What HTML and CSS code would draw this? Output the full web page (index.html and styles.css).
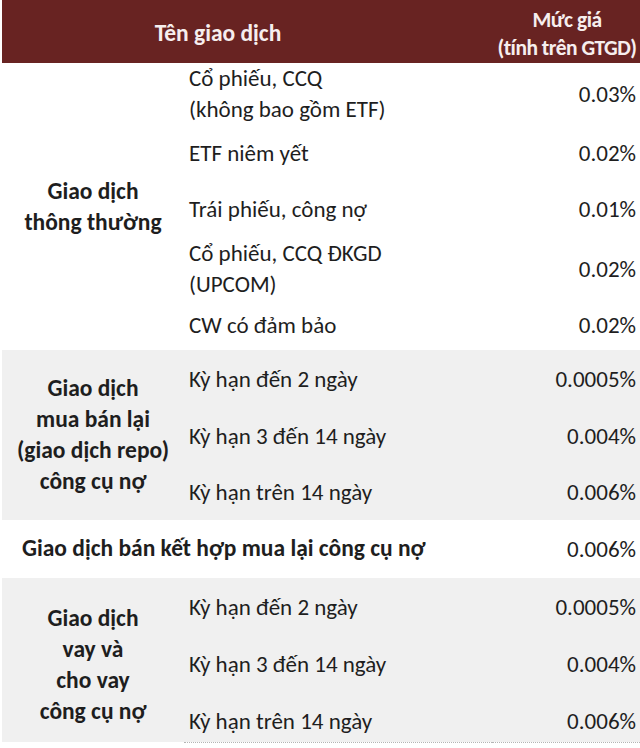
FILE: index.html
```html
<!DOCTYPE html>
<html lang="vi">
<head>
<meta charset="utf-8">
<title>Biểu phí giao dịch</title>
<link rel="stylesheet" href="styles.css">
</head>
<body>
<div class="sheet">
<table class="fees">
  <colgroup>
    <col class="c-group">
    <col class="c-name">
    <col class="c-price">
  </colgroup>
  <thead>
    <tr class="head">
      <th colspan="2" class="h-name">Tên giao dịch</th>
      <th class="h-price">Mức giá<br>(tính trên GTGD)</th>
    </tr>
  </thead>
  <tbody class="white">
    <tr class="r62">
      <td rowspan="5" class="grp">Giao dịch<br>thông thường</td>
      <td class="name">Cổ phiếu, CCQ<br>(không bao gồm ETF)</td>
      <td class="price">0.03%</td>
    </tr>
    <tr class="r56">
      <td class="name">ETF niêm yết</td>
      <td class="price">0.02%</td>
    </tr>
    <tr class="r57">
      <td class="name">Trái phiếu, công nợ</td>
      <td class="price">0.01%</td>
    </tr>
    <tr class="r62">
      <td class="name">Cổ phiếu, CCQ ĐKGD<br>(UPCOM)</td>
      <td class="price">0.02%</td>
    </tr>
    <tr class="r50">
      <td class="name">CW có đảm bảo</td>
      <td class="price">0.02%</td>
    </tr>
  </tbody>
  <tbody class="gray">
    <tr class="r58">
      <td rowspan="3" class="grp">Giao dịch<br>mua bán lại<br>(giao dịch repo)<br>công cụ nợ</td>
      <td class="name">Kỳ hạn đến 2 ngày</td>
      <td class="price">0.0005%</td>
    </tr>
    <tr class="r57">
      <td class="name">Kỳ hạn 3 đến 14 ngày</td>
      <td class="price">0.004%</td>
    </tr>
    <tr class="r55">
      <td class="name">Kỳ hạn trên 14 ngày</td>
      <td class="price">0.006%</td>
    </tr>
  </tbody>
  <tbody class="white">
    <tr class="r58">
      <td colspan="2" class="wide">Giao dịch bán kết hợp mua lại công cụ nợ</td>
      <td class="price">0.006%</td>
    </tr>
  </tbody>
  <tbody class="gray last">
    <tr class="r58">
      <td rowspan="3" class="grp grp-low">Giao dịch<br>vay và<br>cho vay<br>công cụ nợ</td>
      <td class="name">Kỳ hạn đến 2 ngày</td>
      <td class="price">0.0005%</td>
    </tr>
    <tr class="r57">
      <td class="name">Kỳ hạn 3 đến 14 ngày</td>
      <td class="price">0.004%</td>
    </tr>
    <tr class="r49">
      <td class="name low">Kỳ hạn trên 14 ngày</td>
      <td class="price low">0.006%</td>
    </tr>
  </tbody>
</table>
</div>
</body>
</html>
```
FILE: styles.css
```css
html, body {
  margin: 0;
  padding: 0;
  background: #ffffff;
}

body {
  font-family: Carlito, Calibri, "Liberation Sans Narrow", "Open Sans", sans-serif;
  color: #1e1e1e;
  font-size: 23px;
}

.sheet {
  width: 640px;
  height: 748px;
  overflow: hidden;
}

.fees {
  width: 638px;
  margin-left: 2px;
  border-collapse: collapse;
  table-layout: fixed;
}

.c-group { width: 182px; }
.c-name { width: 308px; }
.c-price { width: 148px; }

.fees td,
.fees th {
  padding: 0;
  vertical-align: middle;
  line-height: 31px;
}

.head {
  background: #682322;
  color: #f6eeee;
  height: 63px;
}

.fees .head th {
  font-weight: bold;
  font-size: 23.5px;
  line-height: 28px;
  white-space: nowrap;
}

.fees .head .h-name {
  text-align: center;
  padding-right: 58px;
  padding-top: 2px;
}

.fees .head .h-price {
  text-align: center;
  padding-top: 4px;
  padding-left: 2px;
  font-size: 21.5px;
  letter-spacing: -0.5px;
}

.white { background: #ffffff; }
.gray { background: #f0f0f0; }

.gray.last tr:last-child td {
  border-bottom: 1px dotted #b4b4b4;
}

.fees .grp {
  text-align: center;
  font-weight: bold;
  font-size: 23.5px;
}

.fees .grp-low { padding-top: 9px; }

.fees .name {
  padding-left: 5px;
  text-align: left;
}

.fees .wide {
  padding-left: 20px;
  font-weight: bold;
  font-size: 23.5px;
  padding-bottom: 2px;
}

.fees .price {
  text-align: right;
  padding-right: 4px;
}

.fees .low { padding-top: 9px; }

.r62 { height: 62px; }
.r58 { height: 58px; }
.r57 { height: 57px; }
.r56 { height: 56px; }
.r55 { height: 55px; }
.r50 { height: 50px; }
.r49 { height: 49px; }
```
